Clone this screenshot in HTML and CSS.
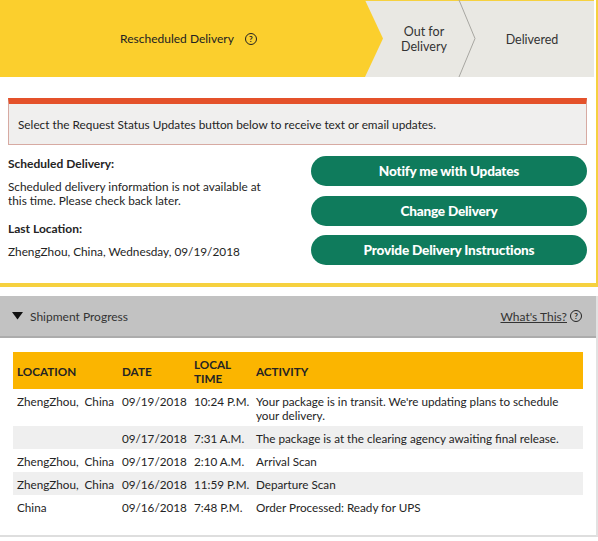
FILE: index.html
```html
<!DOCTYPE html>
<html lang="en">
<head>
    <meta charset="UTF-8">
    <title>Tracking Details</title>
    <link rel="stylesheet" href="styles.css">
</head>
<body>
    <!-- Status card -->
    <section class="status-card">
        <div class="progress">
            <div class="step step-current">
                <span>Rescheduled Delivery</span>
                <span class="help">?</span>
            </div>
            <div class="step step-next">Out for<br>Delivery</div>
            <svg class="chevron" width="18" height="77" viewBox="0 0 18 77">
                <polyline points="1,0 17,38.5 1,77" fill="none" stroke="#a7a6a1" stroke-width="1"/>
            </svg>
            <div class="step step-last">Delivered</div>
        </div>

        <div class="status-body">
            <div class="alert">
                Select the Request Status Updates button below to receive text or email updates.
            </div>

            <div class="details">
                <div class="info">
                    <h3>Scheduled Delivery:</h3>
                    <p>Scheduled delivery information is not available at this time. Please check back later.</p>
                    <h3>Last Location:</h3>
                    <p>ZhengZhou, China, Wednesday, 09/19/2018</p>
                </div>
                <div class="actions">
                    <button>Notify me with Updates</button>
                    <button>Change Delivery</button>
                    <button>Provide Delivery Instructions</button>
                </div>
            </div>
        </div>
    </section>

    <!-- Shipment progress -->
    <section class="shipment">
        <div class="shipment-head">
            <div class="toggle">
                <svg width="11" height="8" viewBox="0 0 11 8"><polygon points="0,0 11,0 5.5,7.5" fill="#111"/></svg>
                <span>Shipment Progress</span>
            </div>
            <div class="whats-this">
                <a href="#">What's This?</a>
                <span class="help">?</span>
            </div>
        </div>

        <table class="progress-table">
            <tr>
                <th class="col-loc">LOCATION</th>
                <th class="col-date">DATE</th>
                <th class="col-time">LOCAL<br>TIME</th>
                <th>ACTIVITY</th>
            </tr>
            <tr>
                <td>ZhengZhou,&nbsp; China</td>
                <td>09/19/2018</td>
                <td>10:24 P.M.</td>
                <td>Your package is in transit. We're updating plans to schedule your delivery.</td>
            </tr>
            <tr class="alt">
                <td></td>
                <td>09/17/2018</td>
                <td>7:31 A.M.</td>
                <td>The package is at the clearing agency awaiting final release.</td>
            </tr>
            <tr>
                <td>ZhengZhou,&nbsp; China</td>
                <td>09/17/2018</td>
                <td>2:10 A.M.</td>
                <td>Arrival Scan</td>
            </tr>
            <tr class="alt">
                <td>ZhengZhou,&nbsp; China</td>
                <td>09/16/2018</td>
                <td>11:59 P.M.</td>
                <td>Departure Scan</td>
            </tr>
            <tr>
                <td>China</td>
                <td>09/16/2018</td>
                <td>7:48 P.M.</td>
                <td>Order Processed: Ready for UPS</td>
            </tr>
        </table>
    </section>
</body>
</html>
```

FILE: styles.css
```css
body {
    margin: 0;
    font-family: Lato, "Open Sans", sans-serif;
    color: #242424;
    background-color: white;
    width: 598px;
}

.status-card {
    border-right: 2px solid #f6d13f;
    border-bottom: 4px solid #f6d13f;
}

/* Progress steps */
.progress {
    display: flex;
    height: 77px;
    background-color: #e9e8e3;
    border-top: 1px solid #f6d13f;
    box-sizing: border-box;
    margin-right: 2px;
    font-size: 12.5px;
    color: #333;
}

.step {
    display: flex;
    align-items: center;
    justify-content: center;
    text-align: center;
    line-height: 15px;
}

.step-current {
    width: 383px;
    flex-shrink: 0;
    margin-top: -1px;
    height: 77px;
    gap: 11px;
    padding-left: 12px;
    padding-right: 18px;
    box-sizing: border-box;
    background-color: #fbcf2d;
    clip-path: polygon(0 0, 365px 0, 100% 50%, 365px 100%, 0 100%);
    font-size: 12px;
    color: #222;
}

.step-next {
    width: 82px;
    flex-shrink: 0;
}

.chevron {
    flex-shrink: 0;
    margin-left: -7px;
    margin-top: -1px;
}

.step-last {
    flex: 1;
    padding-right: 6px;
}

.help {
    display: inline-flex;
    align-items: center;
    justify-content: center;
    width: 10px;
    height: 10px;
    border: 1.3px solid #222;
    border-radius: 50%;
    font-size: 8px;
    font-weight: bold;
    line-height: 1;
}

/* Status body */
.status-body {
    padding: 21px 9px 11px 8px;
    font-size: 11.8px;
}

.alert {
    border: 1px solid #d7aaa2;
    border-top: 6px solid #e4512a;
    background-color: #f0efee;
    padding: 13px 9px 12px;
    line-height: 15px;
}

.details {
    display: flex;
    justify-content: space-between;
    margin-top: 11px;
}

.info {
    width: 262px;
}

.info h3 {
    margin: 0;
    font-size: 12px;
    font-weight: 700;
    line-height: 16px;
}

.info p {
    margin: 8px 0 13px;
    line-height: 14px;
}

.actions {
    display: flex;
    flex-direction: column;
    gap: 9.5px;
    width: 276px;
}

button {
    height: 30px;
    border: none;
    border-radius: 15px;
    background-color: #0f7b5c;
    color: white;
    font-family: Lato, sans-serif;
    font-size: 13.6px;
    font-weight: 900;
    letter-spacing: -0.2px;
    cursor: pointer;
}

/* Shipment progress */
.shipment {
    margin-top: 9px;
    border-right: 2px solid #e2e2e2;
    border-bottom: 2px solid #dedede;
    padding-bottom: 17px;
    font-size: 11.7px;
}

.shipment-head {
    display: flex;
    justify-content: space-between;
    align-items: center;
    height: 40px;
    background-color: #c2c2c2;
    border-bottom: 2px solid #acacac;
    padding: 0 14px 0 12px;
    font-size: 12px;
}

.toggle {
    display: flex;
    align-items: center;
    gap: 7px;
    color: #333;
}

.whats-this {
    display: flex;
    align-items: center;
    gap: 3px;
}

.whats-this a {
    color: #333;
}

.progress-table {
    margin: 14px 15px 0 13px;
    width: 570px;
    border-collapse: collapse;
    table-layout: fixed;
}

.progress-table th,
.progress-table td {
    padding: 4px 4px;
    text-align: left;
    vertical-align: top;
    line-height: 14px;
}

.progress-table th {
    background-color: #fbb500;
    font-weight: 700;
    vertical-align: middle;
    height: 29px;
}

.progress-table td:nth-child(-n+3) {
    white-space: nowrap;
}

.col-loc {
    width: 97px;
}

.col-date {
    width: 64px;
}

.col-time {
    width: 54px;
}

.progress-table td {
    padding-top: 5px;
    padding-bottom: 4px;
}

.progress-table .alt td {
    background-color: #efefef;
}
```
